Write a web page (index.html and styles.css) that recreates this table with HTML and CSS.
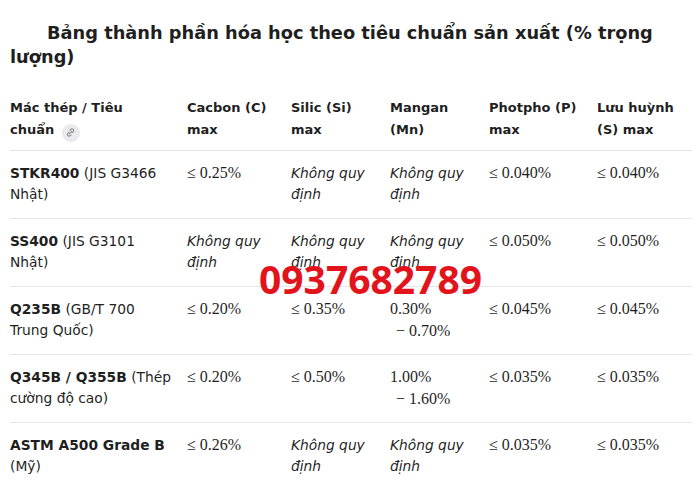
FILE: index.html
```html
<!DOCTYPE html>
<html lang="vi">
<head>
<meta charset="utf-8">
<link rel="stylesheet" href="styles.css">
</head>
<body>
<div class="page">
  <h2 class="title">Bảng thành phần hóa học theo tiêu chuẩn sản xuất (% trọng lượng)</h2>
  <table class="chem">
    <colgroup>
      <col class="c1"><col class="c2"><col class="c3"><col class="c4"><col class="c5"><col class="c6">
    </colgroup>
    <thead>
      <tr>
        <th>Mác thép / Tiêu <span class="nw">chuẩn <span class="link"><svg viewBox="0 0 16 16" width="11" height="11"><path d="M6.3 9.7l3.4-3.4M7.2 4.6l1.3-1.3a2.4 2.4 0 0 1 3.4 3.4l-1.3 1.3M8.8 11.4l-1.3 1.3a2.4 2.4 0 0 1-3.4-3.4l1.3-1.3" fill="none" stroke="#85858b" stroke-width="1.5" stroke-linecap="round"/></svg></span></span></th>
        <th>Cacbon (C) max</th>
        <th>Silic (Si) max</th>
        <th>Mangan (Mn)</th>
        <th>Photpho (P) max</th>
        <th>Lưu huỳnh (S) max</th>
      </tr>
    </thead>
    <tbody>
      <tr>
        <td><b>STKR400</b> (JIS G3466 Nhật)</td>
        <td><span class="m">≤ 0.25%</span></td>
        <td><i>Không quy định</i></td>
        <td><i>Không quy định</i></td>
        <td><span class="m">≤ 0.040%</span></td>
        <td><span class="m">≤ 0.040%</span></td>
      </tr>
      <tr>
        <td><b>SS400</b> (JIS G3101 Nhật)</td>
        <td><i>Không quy định</i></td>
        <td><i>Không quy định</i></td>
        <td><i>Không quy định</i></td>
        <td><span class="m">≤ 0.050%</span></td>
        <td><span class="m">≤ 0.050%</span></td>
      </tr>
      <tr>
        <td><b>Q235B</b> (GB/T 700 Trung Quốc)</td>
        <td><span class="m">≤ 0.20%</span></td>
        <td><span class="m">≤ 0.35%</span></td>
        <td><span class="m">0.30%</span><span class="m cont">− 0.70%</span></td>
        <td><span class="m">≤ 0.045%</span></td>
        <td><span class="m">≤ 0.045%</span></td>
      </tr>
      <tr>
        <td><b>Q345B / Q355B</b> (Thép cường độ cao)</td>
        <td><span class="m">≤ 0.20%</span></td>
        <td><span class="m">≤ 0.50%</span></td>
        <td><span class="m">1.00%</span><span class="m cont">− 1.60%</span></td>
        <td><span class="m">≤ 0.035%</span></td>
        <td><span class="m">≤ 0.035%</span></td>
      </tr>
      <tr>
        <td><b>ASTM A500 Grade B</b> (Mỹ)</td>
        <td><span class="m">≤ 0.26%</span></td>
        <td><i>Không quy định</i></td>
        <td><i>Không quy định</i></td>
        <td><span class="m">≤ 0.035%</span></td>
        <td><span class="m">≤ 0.035%</span></td>
      </tr>
    </tbody>
  </table>
  <div class="watermark">0937682789</div>
</div>
</body>
</html>
```
FILE: styles.css
```css
html, body {
  margin: 0;
  padding: 0;
  background: #ffffff;
}
body {
  font-family: "DejaVu Sans", Verdana, sans-serif;
  color: #1f1f1f;
}
.page {
  position: relative;
  padding: 21px 8px 0 10px;
}
.title {
  margin: 0;
  font-size: 17.8px;
  font-weight: 700;
  line-height: 24px;
  text-indent: 37px;
  color: #1f1f1f;
}
.chem {
  margin-top: 28px;
  width: 682px;
  border-collapse: collapse;
  table-layout: fixed;
}
.c1 { width: 177px; }
.c2 { width: 104px; }
.c3 { width: 99px; }
.c4 { width: 99px; }
.c5 { width: 108px; }
.c6 { width: 95px; }
.chem th {
  text-align: left;
  vertical-align: top;
  font-size: 13px;
  font-weight: 700;
  line-height: 22px;
  padding: 0 10px 9px 0;
  border-bottom: 1px solid #e3e3e3;
}
.nw {
  white-space: nowrap;
}
.chem td {
  vertical-align: top;
  font-size: 13.8px;
  line-height: 21px;
  padding: 12px 8px 13px 0;
  border-bottom: 1px solid #e6e6e6;
}
.chem td:first-child {
  padding-right: 14px;
}
.chem tbody tr:last-child td {
  border-bottom: none;
}
.chem td b {
  font-weight: 700;
}
.chem td i {
  font-style: italic;
}
.m {
  font-family: "Liberation Serif", "Times New Roman", serif;
  font-size: 16px;
  line-height: 1;
}
.cont {
  display: block;
  line-height: 21px;
  padding-left: 6px;
}
.link {
  display: inline-flex;
  align-items: center;
  justify-content: center;
  width: 18px;
  height: 18px;
  border-radius: 50%;
  background: #e9e9ee;
  vertical-align: -4px;
  margin: -3px 0 -3px 3px;
}
.watermark {
  position: absolute;
  left: 259px;
  top: 255px;
  font-family: "Open Sans", sans-serif;
  font-weight: 700;
  font-size: 39px;
  line-height: 48px;
  color: #e3131c;
}
```
